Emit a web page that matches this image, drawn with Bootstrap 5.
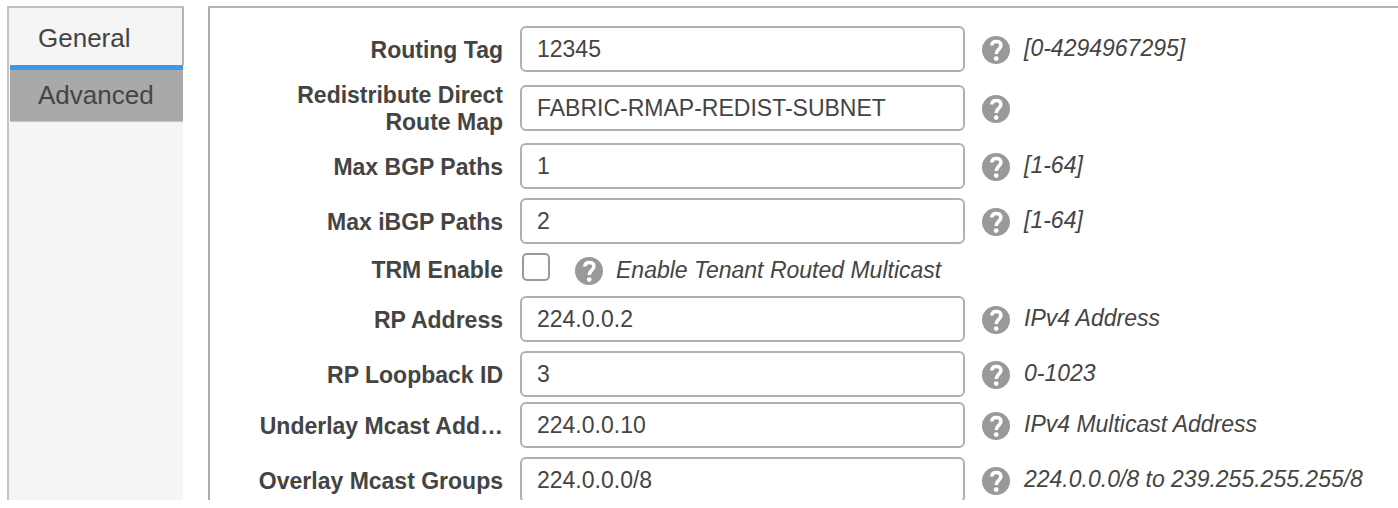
<!DOCTYPE html>
<html lang="en">
<head>
<meta charset="utf-8">
<meta name="viewport" content="width=device-width, initial-scale=1">
<title>Fabric settings</title>
<link href="https://cdn.jsdelivr.net/npm/bootstrap@5.3.0/dist/css/bootstrap.min.css" rel="stylesheet">
<style>
  body { font-family: "Liberation Sans", Arial, sans-serif; font-size: 23px; line-height: 27px; color: #444; background: #fff; }
  .page { padding: 6px 0 8px 7px; gap: 24px; }
  .side { flex: 0 0 177px; padding-right: 1px; }
  .side-fill { background: #f5f5f5; border-left: 2px solid #c4c4c4; padding-left: 1px; }
  .tab-btn { font-size: 26px; line-height: 30px; color: #444; text-align: left; border: 0; padding: 15px 0 12px 28px; }
  .tab-current { background: #f5f5f5; border-top: 2px solid #c0c0c0; border-right: 2px solid #b4b4b4; margin: 0 -1px; padding-left: 29px; }
  .tab-other { background: #a9a9a9; border-top: 5px solid #3c99ea; border-bottom: 1px solid #c4c4c4; padding: 10px 0 11px 28px; }
  .panel { border-top: 2px solid #b4b4b4; border-left: 2px solid #adadad; padding: 18px 0 0 47px; min-width: 0; }
  .field { display: flex; align-items: center; margin-bottom: 9px; }
  .field.near { margin-bottom: 5px; }
  .field.tall { margin-bottom: 7px; }
  .field-label { flex: 0 0 246px; padding-top: 2px; font-weight: 700; text-align: right; margin-right: 17px; }
  .field .form-control { flex: 0 1 445px; height: 46px; font-size: 23px; line-height: 27px; color: #444; border: 2px solid #b0b0b0; border-radius: 6px; padding: 0 15px; }
  .field .form-check-input { width: 28px; height: 28px; margin: 0 0 6px 2px; border: 2px solid #999; border-radius: 5px; }
  .help { flex: none; width: 28px; height: 28px; margin: 2px 14px 0 17px; padding: 0; border: 0; background: none; display: flex; }
  .check-row { height: 34px; }
  .check-row .field-label { padding-top: 0; }
  .check-row .help { margin-left: 25px; margin-right: 13px; }
  .hint { font-style: italic; white-space: nowrap; margin-bottom: 2px; }
  .check-row .hint { margin-bottom: 0; }
</style>
</head>
<body>
<svg class="d-none" aria-hidden="true">
  <symbol id="q" viewBox="0 0 28 28">
    <circle cx="14" cy="14" r="14" fill="#999"/>
    <path d="M9.800 9.500C9.900 6.800 11.600 5.400 14.200 5.400c2.900 0 4.700 1.600 4.700 4 0 3.500-4.700 4.300-4.700 8.600" fill="none" stroke="#fff" stroke-width="3.500"/>
    <circle cx="14.200" cy="22.600" r="2.400" fill="#fff"/>
  </symbol>
</svg>
<div class="page d-flex vh-100 overflow-hidden">
  <nav class="side d-flex" aria-label="Settings sections">
    <div class="side-fill d-flex flex-column flex-grow-1">
      <button type="button" class="tab-btn tab-current" aria-current="true">General</button>
      <button type="button" class="tab-btn tab-other">Advanced</button>
    </div>
  </nav>
  <main class="panel flex-grow-1 overflow-hidden">
    <form>
      <div class="field mb-2">
        <label class="field-label" for="tag">Routing Tag</label>
        <input class="form-control" id="tag" type="text" value="12345">
        <button type="button" class="help" aria-label="Help"><svg width="28" height="28"><use href="#q"/></svg></button>
        <span class="hint">[0-4294967295]</span>
      </div>
      <div class="field tall">
        <label class="field-label" for="rmap">Redistribute Direct Route Map</label>
        <input class="form-control" id="rmap" type="text" value="FABRIC-RMAP-REDIST-SUBNET">
        <button type="button" class="help" aria-label="Help"><svg width="28" height="28"><use href="#q"/></svg></button>
      </div>
      <div class="field">
        <label class="field-label" for="bgp">Max BGP Paths</label>
        <input class="form-control" id="bgp" type="text" value="1">
        <button type="button" class="help" aria-label="Help"><svg width="28" height="28"><use href="#q"/></svg></button>
        <span class="hint">[1-64]</span>
      </div>
      <div class="field">
        <label class="field-label" for="ibgp">Max iBGP Paths</label>
        <input class="form-control" id="ibgp" type="text" value="2">
        <button type="button" class="help" aria-label="Help"><svg width="28" height="28"><use href="#q"/></svg></button>
        <span class="hint">[1-64]</span>
      </div>
      <div class="field check-row">
        <label class="field-label" for="trm">TRM Enable</label>
        <input class="form-check-input" id="trm" type="checkbox">
        <button type="button" class="help" aria-label="Help"><svg width="28" height="28"><use href="#q"/></svg></button>
        <span class="hint">Enable Tenant Routed Multicast</span>
      </div>
      <div class="field">
        <label class="field-label" for="rp">RP Address</label>
        <input class="form-control" id="rp" type="text" value="224.0.0.2">
        <button type="button" class="help" aria-label="Help"><svg width="28" height="28"><use href="#q"/></svg></button>
        <span class="hint">IPv4 Address</span>
      </div>
      <div class="field near">
        <label class="field-label" for="loop">RP Loopback ID</label>
        <input class="form-control" id="loop" type="text" value="3">
        <button type="button" class="help" aria-label="Help"><svg width="28" height="28"><use href="#q"/></svg></button>
        <span class="hint">0-1023</span>
      </div>
      <div class="field">
        <label class="field-label" for="under">Underlay Mcast Add…</label>
        <input class="form-control" id="under" type="text" value="224.0.0.10">
        <button type="button" class="help" aria-label="Help"><svg width="28" height="28"><use href="#q"/></svg></button>
        <span class="hint">IPv4 Multicast Address</span>
      </div>
      <div class="field">
        <label class="field-label" for="over">Overlay Mcast Groups</label>
        <input class="form-control" id="over" type="text" value="224.0.0.0/8">
        <button type="button" class="help" aria-label="Help"><svg width="28" height="28"><use href="#q"/></svg></button>
        <span class="hint">224.0.0.0/8 to 239.255.255.255/8</span>
      </div>
    </form>
  </main>
</div>
<script src="https://cdn.jsdelivr.net/npm/bootstrap@5.3.0/dist/js/bootstrap.bundle.min.js"></script>
</body>
</html>
